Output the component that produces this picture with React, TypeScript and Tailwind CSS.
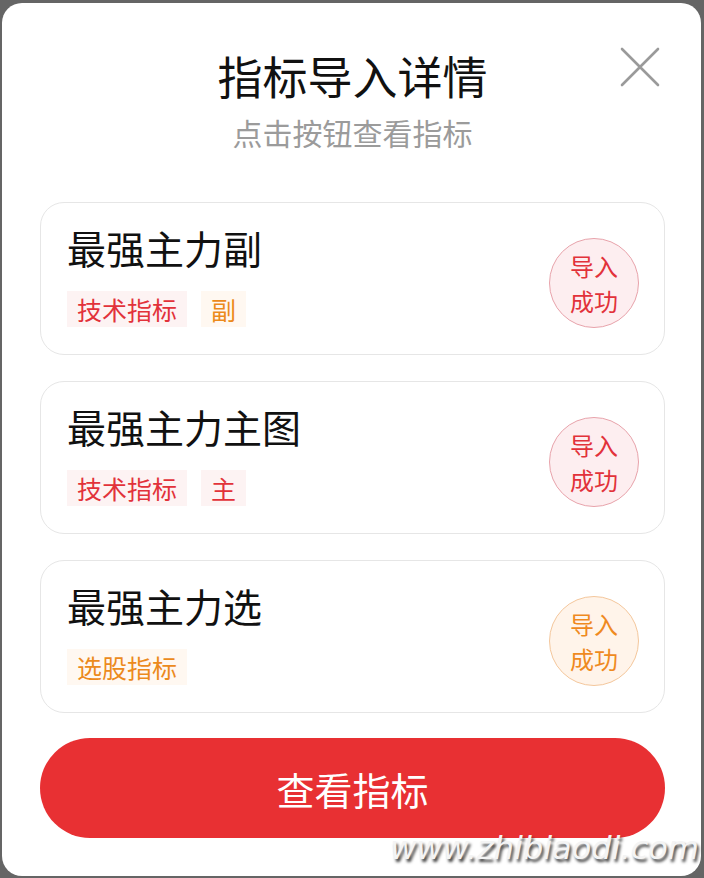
import React from "react";

type Tag = { text: string; tone: "red" | "orange" };

interface Indicator {
  name: string;
  tags: Tag[];
  badge: "red" | "orange";
}

const ITEMS: Indicator[] = [
  { name: "最强主力副", tags: [{ text: "技术指标", tone: "red" }, { text: "副", tone: "orange" }], badge: "red" },
  { name: "最强主力主图", tags: [{ text: "技术指标", tone: "red" }, { text: "主", tone: "red" }], badge: "red" },
  { name: "最强主力选", tags: [{ text: "选股指标", tone: "orange" }], badge: "orange" },
];

const FONT = "font-['Noto_Sans_CJK_SC','Noto_Sans',sans-serif]";

function TagPill({ tag }: { tag: Tag }) {
  const cls =
    tag.tone === "red" ? "bg-[#fdf3f3] text-[#e2323a]" : "bg-[#fff8f1] text-[#ec8a1c]";
  return (
    <span className={`flex h-[36px] items-center px-[10px] text-[25px] leading-none ${cls}`}>{tag.text}</span>
  );
}

function SuccessBadge({ tone }: { tone: "red" | "orange" }) {
  const cls =
    tone === "red"
      ? "border-[#e8a3ab] bg-[#fdeef0] text-[#e2323a]"
      : "border-[#f4c79c] bg-[#fff4ea] text-[#ef8a1f]";
  return (
    <div
      className={`mt-[9px] flex h-[90px] w-[90px] shrink-0 flex-col items-center justify-center rounded-full border text-[24px] leading-[35px] ${cls}`}
    >
      <span>导入</span>
      <span>成功</span>
    </div>
  );
}

function IndicatorCard({ item }: { item: Indicator }) {
  return (
    <div className="flex h-[153px] items-center justify-between rounded-[24px] border border-[#e6e6e6] bg-white pl-[26px] pr-[25px]">
      <div className="flex flex-col gap-[20px] self-start pt-[20px]">
        <div className="text-[39px] leading-[48px] text-[#111]">{item.name}</div>
        <div className="flex gap-[14px]">
          {item.tags.map((t) => (
            <TagPill key={t.text} tag={t} />
          ))}
        </div>
      </div>
      <SuccessBadge tone={item.badge} />
    </div>
  );
}

export default function App() {
  return (
    <div className={`h-[878px] w-[704px] bg-[#656565] pb-[2px] pl-[2px] pr-[3px] pt-[3px] ${FONT}`}>
      <div className="relative flex h-full flex-col rounded-[20px] bg-white pl-[38px] pr-[36px] pt-[47px]">
        {/* 关闭 */}
        <svg className="absolute right-[40px] top-[43px]" width="42" height="42" viewBox="0 0 42 42">
          <path d="M3 3 L39 39 M39 3 L3 39" stroke="#9a9a9a" strokeWidth="2.6" strokeLinecap="round" />
        </svg>

        <div className="text-center text-[45px] leading-[52px] text-[#111]">指标导入详情</div>
        <div className="mt-[12px] text-center text-[30px] leading-[36px] text-[#9b9b9b]">点击按钮查看指标</div>

        <div className="mt-[52px] flex flex-col gap-[26px]">
          {ITEMS.map((it) => (
            <IndicatorCard key={it.name} item={it} />
          ))}
        </div>

        <button className="mt-[25px] flex h-[100px] items-center justify-center rounded-full bg-[#e83033] text-[38px] text-white">
          查看指标
        </button>

        {/* 水印 */}
        <div className="absolute bottom-[12px] right-[2px] font-['DejaVu_Sans',sans-serif] text-[32px] italic leading-none text-[#f4f4f4] [text-shadow:2px_3px_3px_rgba(0,0,0,0.75)]">
          www.zhibiaodi.com
        </div>
      </div>
    </div>
  );
}
